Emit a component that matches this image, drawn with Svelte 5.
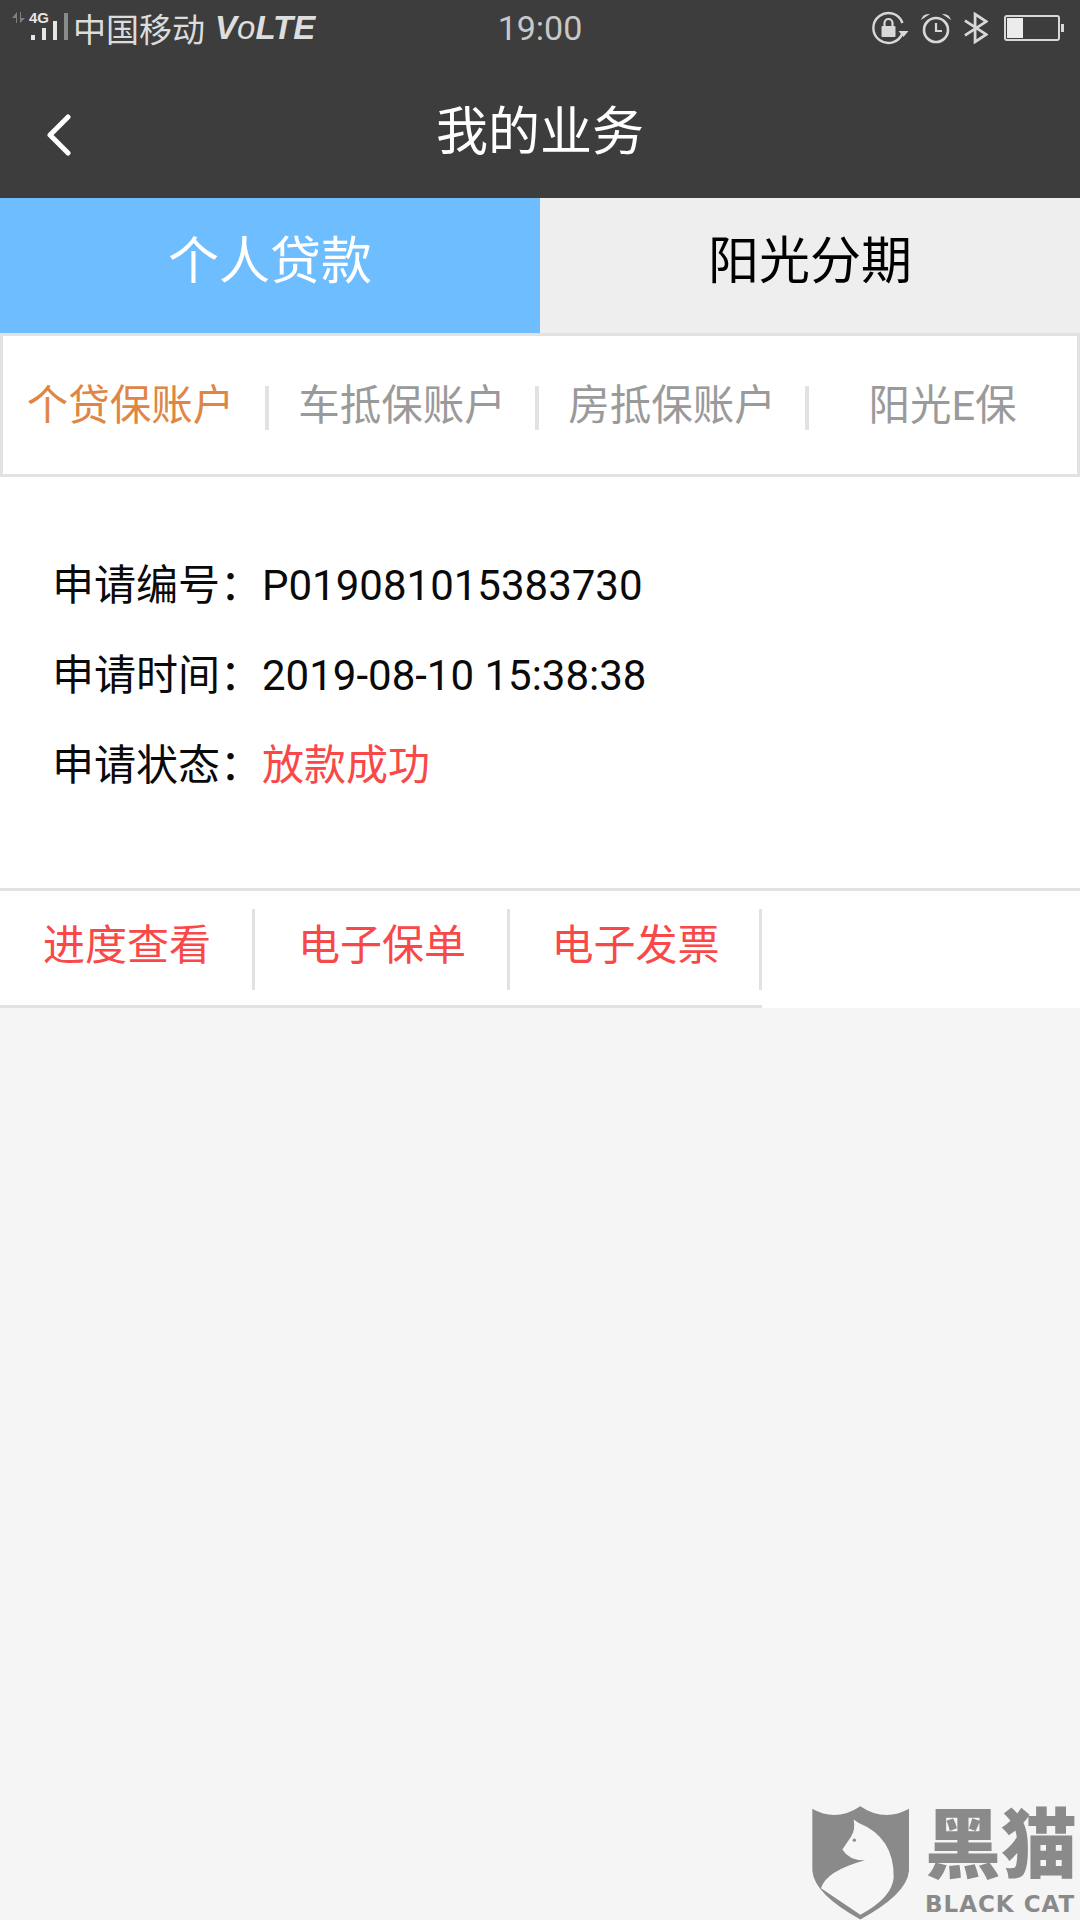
<script>
  const subTabs = ['个贷保账户', '车抵保账户', '房抵保账户', '阳光E保'];
  const rows = [
    { label: '申请编号：', value: 'P019081015383730' },
    { label: '申请时间：', value: '2019-08-10 15:38:38' },
    { label: '申请状态：', value: '放款成功', status: true }
  ];
  const actions = ['进度查看', '电子保单', '电子发票'];
</script>

<main class="page">
  <header class="top">
    <div class="status">
      <div class="status-left">
        <svg class="signal" width="60" height="56" viewBox="11 0 60 56">
          <path d="M12 18 L17 12 V23 H16 V18 Z M20 12 H21 V18 H25 L20 23 Z" fill="#808080" />
          <text x="29" y="23" class="net">4G</text>
          <g fill="#e6e6e6">
            <rect x="31" y="35" width="4" height="5" />
            <rect x="42" y="28" width="4" height="12" />
            <rect x="53" y="21" width="4" height="19" />
          </g>
          <rect x="64" y="13" width="4" height="27" fill="#8a8a8a" />
        </svg>
        <span class="carrier">中国移动</span>
        <span class="volte">V<span class="light">o</span>LTE</span>
      </div>
      <span class="time">19:00</span>
      <div class="status-right">
        <svg class="lock" width="37" height="36" viewBox="0 0 36 36" fill="none">
          <path d="M30 23 A15 15 0 1 1 30 13" stroke="#d8d8d8" stroke-width="2.4" />
          <path d="M26 21 H36 L31 27 Z" fill="#d8d8d8" />
          <rect x="9" y="16" width="14" height="11" rx="1" fill="#d8d8d8" />
          <path d="M12 16 V13 a4 4 0 0 1 8 0 V16" stroke="#d8d8d8" stroke-width="2.2" />
        </svg>
        <svg class="alarm" width="32" height="32" viewBox="0 0 32 32" fill="none">
          <circle cx="16" cy="18" r="12" stroke="#d8d8d8" stroke-width="2.6" />
          <path d="M16 11 V19 H22" stroke="#d8d8d8" stroke-width="2.2" />
          <path d="M1 8 Q3 1 10 2 Z M31 8 Q29 1 22 2 Z" fill="#d8d8d8" />
        </svg>
        <svg class="bt" width="24" height="32" viewBox="0 0 26 32" fill="none">
          <path d="M1 8 L24 23 L12 31 V1 L24 9 L1 24" stroke="#d8d8d8" stroke-width="3" />
        </svg>
        <svg class="battery" width="60" height="26" viewBox="0 0 60 26" fill="none">
          <rect x="1" y="1" width="54" height="24" rx="2" stroke="#d8d8d8" stroke-width="2" />
          <rect x="3" y="3" width="16" height="20" fill="#ececec" />
          <rect x="57" y="9" width="3" height="8" fill="#d8d8d8" />
        </svg>
      </div>
    </div>
    <nav class="nav">
      <svg class="back" width="24" height="42" viewBox="0 0 24 42" fill="none">
        <path d="M21 3 L3 21 L21 39" stroke="#fff" stroke-width="5" stroke-linecap="round" stroke-linejoin="round" />
      </svg>
      <h1>我的业务</h1>
    </nav>
  </header>

  <div class="tabs">
    <div class="tab active">个人贷款</div>
    <div class="tab">阳光分期</div>
  </div>

  <div class="subtabs">
    {#each subTabs as name, i}
      <div class="subtab" class:current={i === 0}><span>{name}</span></div>
    {/each}
  </div>

  <section class="detail">
    {#each rows as row}
      <div class="row">
        <span>{row.label}</span><span class:status-text={row.status}>{row.value}</span>
      </div>
    {/each}
  </section>

  <div class="actions">
    <div class="action-list">
      {#each actions as name}
        <div class="action"><span>{name}</span></div>
      {/each}
    </div>
  </div>

  <div class="rest"></div>

  <div class="watermark">
    <svg width="100" height="117" viewBox="90 70 300 350">
      <path d="M94 84 Q165 125 238 76 Q310 125 384 84 L384 270 Q378 340 238 416 Q100 340 94 270 Z" fill="#8a8a8a" />
      <path d="M218 116 L232 126 Q340 170 338 290 Q334 350 238 402 L120 322 Q135 270 252 238 Q205 240 184 206 L210 168 Q224 145 218 116 Z" fill="#f6f6f6" />
      <circle cx="220" cy="178" r="5" fill="#8a8a8a" />
    </svg>
    <div class="brand">
      <div class="brand-cn">黑猫</div>
      <div class="brand-en">BLACK CAT</div>
    </div>
  </div>
</main>

<style>
  :global(body) {
    margin: 0;
    background: #f5f5f5;
  }

  .page {
    position: relative;
    display: flex;
    flex-direction: column;
    width: 1080px;
    height: 1920px;
    overflow: hidden;
    font-family: Roboto, "Noto Sans CJK SC", sans-serif;
    background: #f5f5f5;
  }

  .top {
    height: 198px;
    background: #3d3d3d;
  }

  .status {
    position: relative;
    display: flex;
    justify-content: space-between;
    align-items: center;
    height: 56px;
    padding: 0 16px 0 11px;
    color: #d8d8d8;
  }

  .status-left {
    display: flex;
    align-items: center;
    gap: 2px;
  }

  .net {
    font: bold 15px "Liberation Sans", sans-serif;
    fill: #e6e6e6;
  }

  .carrier {
    font-size: 33px;
    color: #dcdcdc;
  }

  .volte {
    margin-left: 8px;
    font: italic bold 33px "Liberation Sans", sans-serif;
    color: #dedede;
  }

  .light {
    font-weight: normal;
  }

  .time {
    position: absolute;
    left: 0;
    right: 0;
    text-align: center;
    font-size: 34px;
    color: #c8c8c8;
  }

  .status-right {
    display: flex;
    align-items: center;
  }

  .alarm {
    margin-left: 11px;
  }

  .bt {
    margin-left: 12px;
  }

  .battery {
    margin-left: 16px;
  }

  .nav {
    position: relative;
    display: flex;
    justify-content: center;
    align-items: center;
    height: 142px;
  }

  .back {
    position: absolute;
    left: 47px;
    top: 58px;
  }

  h1 {
    margin: 0;
    font-size: 52px;
    font-weight: 400;
    color: #fff;
  }

  .tabs {
    display: flex;
    height: 135px;
  }

  .tab {
    flex: 1;
    display: flex;
    align-items: center;
    justify-content: center;
    box-sizing: border-box;
    padding-bottom: 18px;
    font-size: 51px;
    color: #000;
    background: #eeeeee;
  }

  .tab.active {
    color: #fff;
    background: #6dbdff;
  }

  .subtabs {
    display: grid;
    grid-template-columns: 266px 270px 270px 1fr;
    height: 144px;
    box-sizing: border-box;
    border: 3px solid #e2e2e2;
    background: #fff;
  }

  .subtab {
    display: flex;
    align-items: center;
    justify-content: center;
    box-sizing: border-box;
    padding: 0 4px 6px 0;
    font-size: 41.5px;
    white-space: nowrap;
    color: #9a9a9a;
    position: relative;
  }

  .subtab:not(:last-child)::after {
    content: "";
    position: absolute;
    right: 0;
    top: 50px;
    width: 4px;
    height: 44px;
    background: #e2e2e2;
  }

  .subtab:last-child {
    padding-right: 1px;
  }

  .subtab.current {
    padding-right: 11px;
    color: #e08644;
  }

  .detail {
    padding: 64px 0 77px 52px;
    background: #fff;
  }

  .row {
    height: 90px;
    line-height: 90px;
    font-size: 42px;
    color: #0a0a0a;
  }

  .status-text {
    color: #f94848;
  }

  .actions {
    background: #fff;
    border-top: 3px solid #e2e2e2;
  }

  .action-list {
    display: flex;
    width: 762px;
    height: 117px;
    box-sizing: border-box;
    padding-top: 18px;
    border-bottom: 3px solid #e2e2e2;
  }

  .action {
    display: flex;
    align-items: center;
    justify-content: center;
    box-sizing: border-box;
    width: 255px;
    height: 81px;
    padding: 0 0 16px 2px;
    border-right: 3px solid #e2e2e2;
    font-size: 42px;
    color: #f94848;
  }

  .action:last-child {
    width: 252px;
  }

  .rest {
    flex: 1;
  }

  .watermark {
    position: absolute;
    left: 811px;
    top: 1804px;
    display: flex;
    gap: 14px;
  }

  .brand {
    display: flex;
    flex-direction: column;
    width: 155px;
  }

  .brand-cn {
    margin-top: -3px;
    font-size: 76px;
    line-height: 90px;
    font-weight: 900;
    white-space: nowrap;
    color: #8a8a8a;
  }

  .brand-en {
    font: bold 23px "DejaVu Sans", sans-serif;
    letter-spacing: 1px;
    white-space: nowrap;
    color: #8a8a8a;
  }
</style>
